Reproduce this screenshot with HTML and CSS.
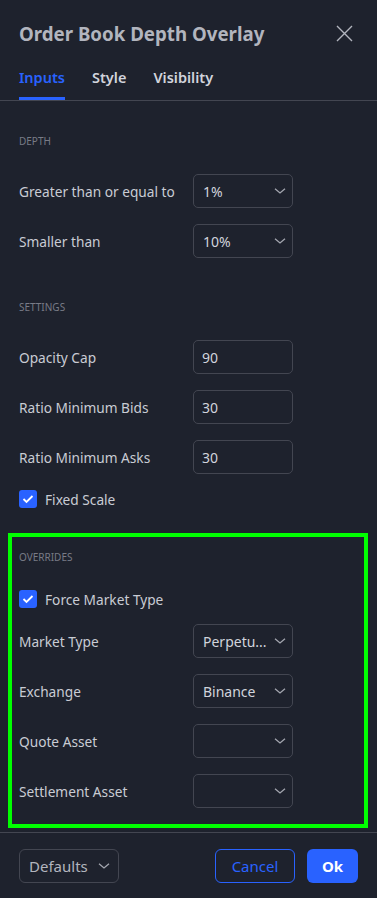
FILE: index.html
```html
<!DOCTYPE html>
<html>
<head>
<meta charset="utf-8">
<link rel="stylesheet" href="styles.css">
</head>
<body>
<div class="dialog">
  <div class="header">
    <div class="title">Order Book Depth Overlay</div>
    <svg class="close" width="17" height="17" viewBox="0 0 17 17"><path d="M1 1L16 16M16 1L1 16" stroke="#b2b5be" stroke-width="1.4" fill="none"/></svg>
  </div>
  <div class="tabs">
    <div class="tab active">Inputs</div>
    <div class="tab">Style</div>
    <div class="tab">Visibility</div>
  </div>
  <div class="content">
    <div class="section-label first">DEPTH</div>
    <div class="row">
      <div class="label">Greater than or equal to</div>
      <div class="field select"><span>1%</span><svg class="chev" width="12" height="6" viewBox="0 0 12 6"><path d="M1 0.8L6 5L11 0.8" stroke="#a3a6af" stroke-width="1.3" fill="none"/></svg></div>
    </div>
    <div class="row">
      <div class="label">Smaller than</div>
      <div class="field select"><span>10%</span><svg class="chev" width="12" height="6" viewBox="0 0 12 6"><path d="M1 0.8L6 5L11 0.8" stroke="#a3a6af" stroke-width="1.3" fill="none"/></svg></div>
    </div>
    <div class="section-label">SETTINGS</div>
    <div class="row">
      <div class="label">Opacity Cap</div>
      <div class="field input"><span>90</span></div>
    </div>
    <div class="row">
      <div class="label">Ratio Minimum Bids</div>
      <div class="field input"><span>30</span></div>
    </div>
    <div class="row">
      <div class="label">Ratio Minimum Asks</div>
      <div class="field input"><span>30</span></div>
    </div>
    <div class="check-row">
      <span class="checkbox"><svg width="12" height="10" viewBox="0 0 12 10"><path d="M1.5 5L4.5 8L10.5 2" stroke="#fff" stroke-width="1.8" fill="none"/></svg></span>
      <span class="label">Fixed Scale</span>
    </div>
    <div class="highlight">
      <div class="section-label inner">OVERRIDES</div>
      <div class="check-row inner-check">
        <span class="checkbox"><svg width="12" height="10" viewBox="0 0 12 10"><path d="M1.5 5L4.5 8L10.5 2" stroke="#fff" stroke-width="1.8" fill="none"/></svg></span>
        <span class="label">Force Market Type</span>
      </div>
      <div class="row first-row">
        <div class="label">Market Type</div>
        <div class="field select"><span>Perpetu...</span><svg class="chev" width="12" height="6" viewBox="0 0 12 6"><path d="M1 0.8L6 5L11 0.8" stroke="#a3a6af" stroke-width="1.3" fill="none"/></svg></div>
      </div>
      <div class="row">
        <div class="label">Exchange</div>
        <div class="field select"><span>Binance</span><svg class="chev" width="12" height="6" viewBox="0 0 12 6"><path d="M1 0.8L6 5L11 0.8" stroke="#a3a6af" stroke-width="1.3" fill="none"/></svg></div>
      </div>
      <div class="row">
        <div class="label">Quote Asset</div>
        <div class="field select"><span></span><svg class="chev" width="12" height="6" viewBox="0 0 12 6"><path d="M1 0.8L6 5L11 0.8" stroke="#a3a6af" stroke-width="1.3" fill="none"/></svg></div>
      </div>
      <div class="row">
        <div class="label">Settlement Asset</div>
        <div class="field select"><span></span><svg class="chev" width="12" height="6" viewBox="0 0 12 6"><path d="M1 0.8L6 5L11 0.8" stroke="#a3a6af" stroke-width="1.3" fill="none"/></svg></div>
      </div>
    </div>
  </div>
  <div class="footer">
    <div class="btn defaults"><span>Defaults</span><svg class="chev" width="12" height="6" viewBox="0 0 12 6"><path d="M1 0.8L6 5L11 0.8" stroke="#a3a6af" stroke-width="1.3" fill="none"/></svg></div>
    <div class="spacer"></div>
    <div class="btn cancel">Cancel</div>
    <div class="btn ok">Ok</div>
  </div>
</div>
</body>
</html>
```
FILE: styles.css
```css
* { box-sizing: border-box; }
html, body { margin: 0; padding: 0; }
body {
  background: #1e222d;
  font-family: "Noto Sans", Roboto, sans-serif;
  color: #d1d4dc;
  width: 377px;
  height: 898px;
  overflow: hidden;
}
.dialog { display: flex; flex-direction: column; }
.header {
  height: 66px;
  display: flex;
  align-items: center;
  justify-content: space-between;
  padding: 0 24px 0 19px;
}
.title {
  font-size: 18.7px;
  font-weight: 700;
  color: #b2b5be;
}
.close { display: block; }
.tabs {
  display: flex;
  gap: 27px;
  padding: 0 19px;
  height: 35px;
  border-bottom: 1px solid #434651;
}
.tab {
  font-size: 14.5px;
  font-weight: 600;
  color: #d1d4dc;
  line-height: 22px;
  height: 34px;
  border-bottom: 3px solid transparent;
}
.tab.active { color: #2962ff; border-bottom-color: #2962ff; }
.content { display: flex; flex-direction: column; }
.section-label {
  font-size: 10px;
  color: #787b86;
  line-height: 16px;
  padding-left: 19px;
  margin-top: 25px;
  margin-bottom: 25px;
}
.section-label.first { margin-top: 32px; }
.row {
  display: grid;
  grid-template-columns: 174px 100px;
  align-items: center;
  padding-left: 19px;
  height: 34px;
  margin-bottom: 16px;
}
.label { font-size: 13.7px; color: #c9ccd4; }
.field {
  height: 34px;
  border: 1px solid #434651;
  border-radius: 5px;
  display: flex;
  align-items: center;
  justify-content: space-between;
  font-size: 14px;
  color: #d1d4dc;
}
.select { padding: 0 6px 0 9px; }
.input { padding: 0 8px; }
.chev { display: block; }
.check-row {
  display: flex;
  align-items: center;
  gap: 8px;
  padding-left: 19px;
  height: 18px;
}
.checkbox {
  width: 18px;
  height: 18px;
  border-radius: 3px;
  background: #2962ff;
  display: flex;
  align-items: center;
  justify-content: center;
}
.highlight {
  margin: 25px 9px 0 8px;
  border: 4px solid #00ff00;
  padding: 12px 0 0 0;
}
.highlight .row { padding-left: 7px; }
.highlight .check-row { padding-left: 7px; }
.section-label.inner { padding-left: 7px; margin-top: 0; margin-bottom: 25px; }
.inner-check { margin-bottom: 16px; }
.footer {
  margin-top: 4px;
  border-top: 1px solid #434651;
  padding: 16px 19px 0 19px;
  display: flex;
  align-items: center;
}
.spacer { flex: 1; }
.btn {
  height: 34px;
  border-radius: 6px;
  display: flex;
  align-items: center;
  justify-content: center;
  font-size: 15px;
}
.defaults {
  width: 100px;
  border: 1px solid #434651;
  justify-content: space-between;
  padding: 0 8px 0 9px;
  color: #b2b5be;
}
.cancel {
  width: 80px;
  border: 1px solid #2962ff;
  color: #2962ff;
  margin-right: 12px;
}
.ok {
  width: 51px;
  background: #2962ff;
  color: #fff;
  font-weight: 700;
}
```
